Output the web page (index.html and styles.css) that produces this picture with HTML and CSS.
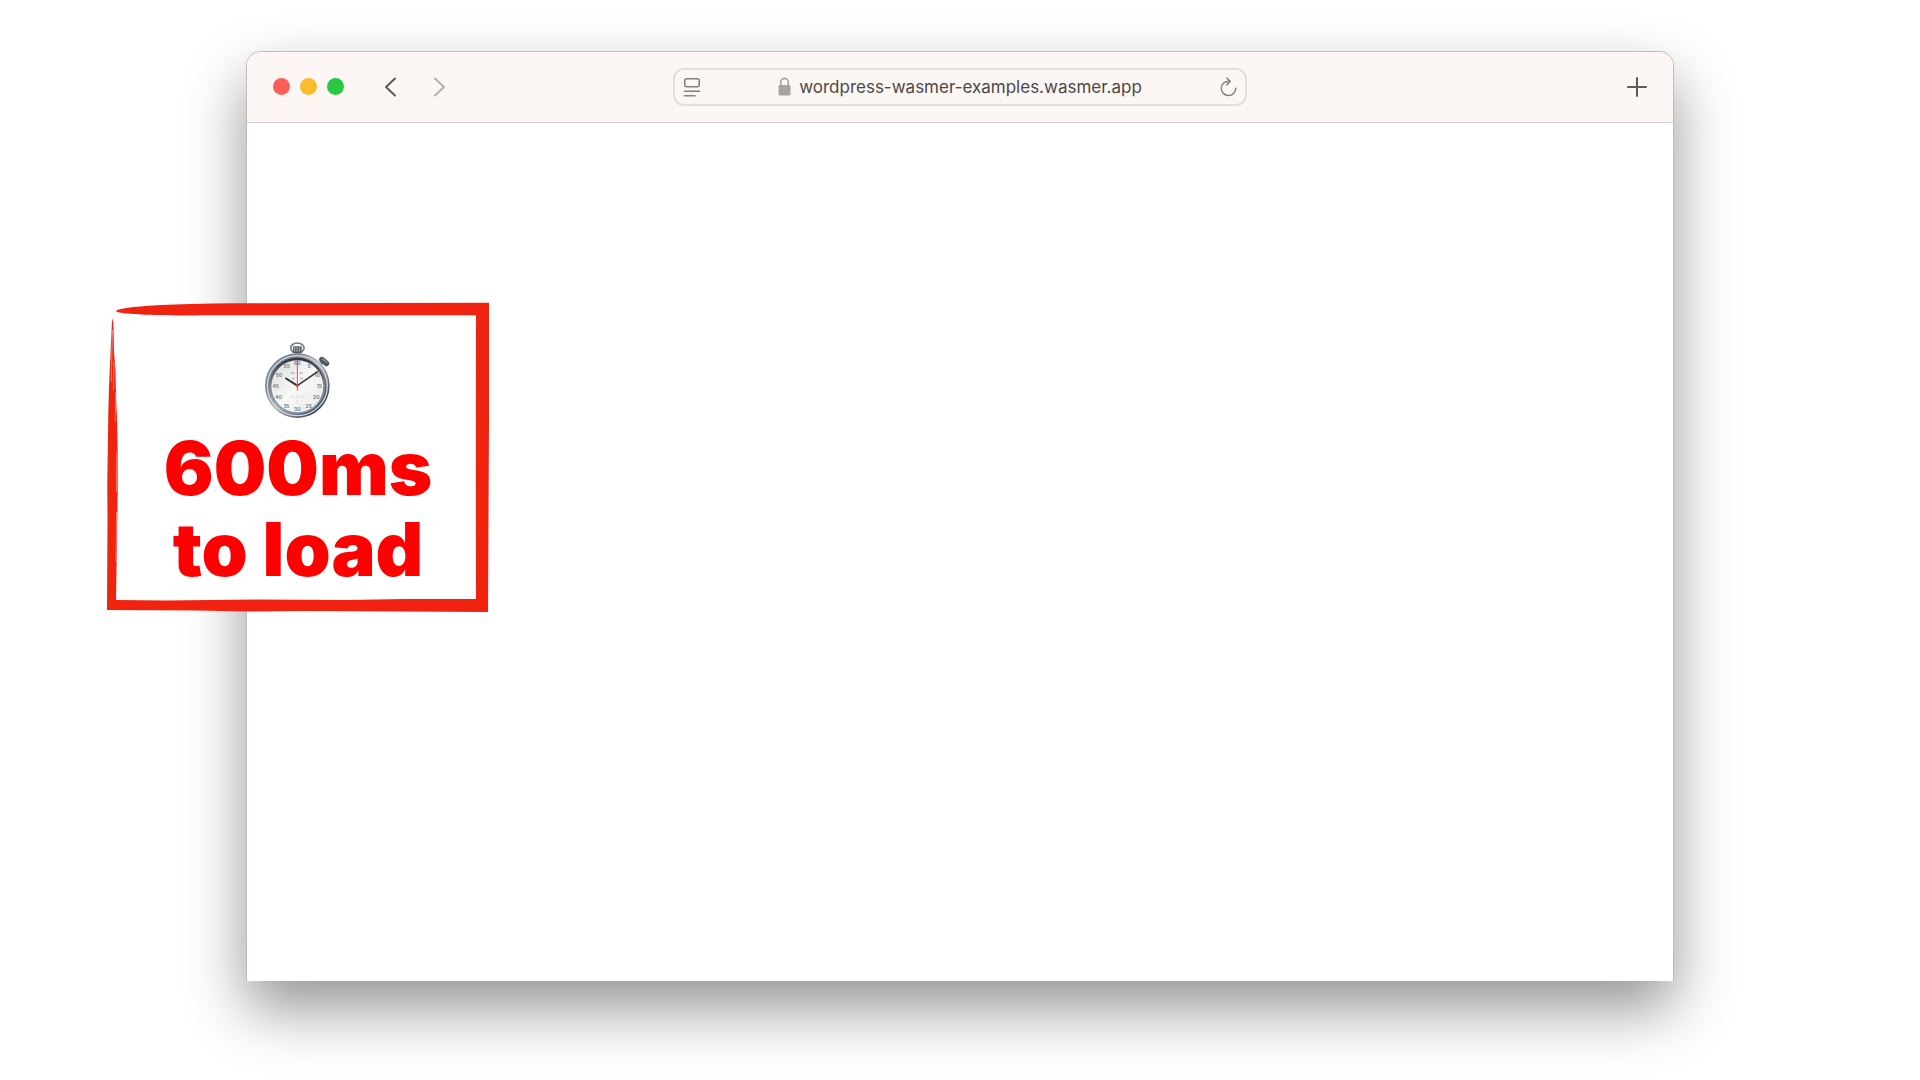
FILE: index.html
```
<!DOCTYPE html>
<html lang="en">
<head>
  <meta charset="UTF-8" />
  <meta name="viewport" content="width=device-width, initial-scale=1.0" />
  <title>600ms to load</title>
  <link rel="stylesheet" href="styles.css">
</head>
<body>
  <main class="stage">
    <!-- Browser window -->
    <div class="browser">
      <header class="toolbar">
        <div class="toolbar-left">
          <div class="lights">
            <button class="light red" aria-label="Close"></button>
            <button class="light yellow" aria-label="Minimize"></button>
            <button class="light green" aria-label="Zoom"></button>
          </div>
          <div class="history">
            <button class="icon-button" aria-label="Back">
              <svg width="13" height="20" viewBox="0 0 13 20"><path d="M11 1.500 2 10l9 8.500" /></svg>
            </button>
            <button class="icon-button forward" aria-label="Forward">
              <svg width="13" height="20" viewBox="0 0 13 20"><path d="M2 1.500 11 10l-9 8.500" /></svg>
            </button>
          </div>
        </div>

        <form class="address">
          <button type="button" class="icon-button small" aria-label="Page settings">
            <svg width="18" height="20" viewBox="0 0 18 20">
              <rect x="1.700" y="1.700" width="14.600" height="8" rx="2" />
              <path d="M1.500 14.200h15M1.500 18.700h10.500" />
            </svg>
          </button>
          <div class="url">
            <svg class="lock" width="13" height="19" viewBox="0 0 13 19">
              <path class="shackle" d="M2.700 9V5.200a3.800 3.800 0 0 1 7.600 0V9" />
              <rect x="0.500" y="8" width="12" height="10.500" rx="1.600" />
            </svg>
            <input type="text" aria-label="Address" value="wordpress-wasmer-examples.wasmer.app">
          </div>
          <button type="button" class="icon-button small" aria-label="Reload">
            <svg width="18" height="20" viewBox="0 0 18 20">
              <path d="M10 4.200A7.200 7.200 0 1 0 16.700 11.200" />
              <path d="M7.800 1 11.200 4.200 7.800 7.600" />
            </svg>
          </button>
        </form>

        <div class="toolbar-right">
          <button class="icon-button" aria-label="New tab">
            <svg width="20" height="20" viewBox="0 0 20 20"><path d="M10 1v18M1 10h18" /></svg>
          </button>
        </div>
      </header>
      <section class="page"></section>

      <!-- Load time callout -->
      <aside class="callout">
        <svg class="frame" viewBox="0 0 384 312" preserveAspectRatio="none">
          <path class="paper" d="M9 12 20 6H376V303H6Z" />
          <path class="brush" d="M10 8.700C13 7 20 5.500 32 4.700C42 3.500 52 3 62 2.700C95 1.500 125 1.300 156 1.300L383 .700L383 120L382 310L200 309L140 309.500L90 308.500L1 308L1.500 220L1.300 180L2.300 111L3 85L5 41L6 20L7 16L7.500 26L8 50L9.500 68L10 95L11 115L11.700 150L11.700 188L11 240L10 298L60 298.500L150 297.500L240 298L300 297L370 297L369.800 180L370 13.300H106C80 13.600 55 13.300 39 12.700C30 12.300 24 12 19 11.300C13 10.500 10 10 10 8.700Z" />
          <path class="scratch" d="M6.500 28 5.800 55 5.300 80M8 60 7.500 88M9.800 90 9.300 120M10.800 150 10.400 190M10.600 210 10 260" />
        </svg>
        <svg class="stopwatch" width="66" height="77" viewBox="0 0 198 231">
          <defs>
            <linearGradient id="metal" x1="0" y1="0" x2="1" y2="1">
              <stop offset="0" stop-color="#637f9b" />
              <stop offset=".3" stop-color="#7d858c" />
              <stop offset=".5" stop-color="#b5b9bc" />
              <stop offset=".75" stop-color="#5c6169" />
              <stop offset="1" stop-color="#1d222c" />
            </linearGradient>
            <linearGradient id="rim" x1="0" y1="0" x2="0" y2="1">
              <stop offset="0" stop-color="#2f333b" />
              <stop offset=".5" stop-color="#7f8387" />
              <stop offset="1" stop-color="#7f9fc5" />
            </linearGradient>
            <linearGradient id="dial" x1="0" y1="0" x2="1" y2="1">
              <stop offset="0" stop-color="#d9dadb" />
              <stop offset=".5" stop-color="#f8f8f8" />
              <stop offset="1" stop-color="#e6e7e9" />
            </linearGradient>
          </defs>
          <ellipse cx="97" cy="18" rx="20" ry="15" fill="none" stroke="#59616b" stroke-width="5" />
          <ellipse cx="97" cy="17" rx="20" ry="15" fill="none" stroke="#c3c8cc" stroke-width="1.500" />
          <rect x="84" y="13" width="26" height="20" rx="3" fill="#555c65" />
          <path d="M89 15v14M96 15v14M103 15v14" stroke="#aeb3b8" stroke-width="3" />
          <path d="m160 74 14-15" stroke="#7893ad" stroke-width="9" />
          <path d="m171 53 13 11" stroke="#4d555d" stroke-width="17" stroke-linecap="round" />
          <path d="m171 49 15 13" stroke="#8b9299" stroke-width="4" />
          <circle cx="97" cy="131" r="97" fill="url(#metal)" />
          <circle cx="97" cy="131" r="90" fill="none" stroke="#cfd8de" stroke-width="4" />
          <circle cx="97" cy="131" r="84" fill="url(#rim)" />
          <circle cx="97" cy="133" r="78" fill="url(#dial)" />
          <g class="numbers">
            <text x="97" y="69">60</text>
            <text x="132" y="79">5</text>
            <text x="156" y="104">10</text>
            <text x="163" y="138">15</text>
            <text x="154" y="171">20</text>
            <text x="131" y="197">25</text>
            <text x="97" y="207">30</text>
            <text x="64" y="197">35</text>
            <text x="41" y="171">40</text>
            <text x="32" y="138">45</text>
            <text x="42" y="104">50</text>
            <text x="65" y="79">55</text>
          </g>
          <path d="M78 93h11M104 93h12M81 109h9M105 109h9" stroke="#a7a7a7" stroke-width="5" stroke-dasharray="4 2" />
          <path d="M77 164h12M106 164h12M97 158v10M97 174v10" stroke="#dcdcdc" stroke-width="3" />
          <path d="m97 131 62-43" stroke="#32343a" stroke-width="5" />
          <path d="m97 131-36-23" stroke="#32343a" stroke-width="6" />
          <path d="M97 53v93" stroke="#f0493e" stroke-width="3" />
          <circle cx="97" cy="131" r="4" fill="#e4453c" />
        </svg>
        <p>600ms<br>to load</p>
      </aside>
    </div>
  </main>
</body>
</html>
```
FILE: styles.css
```
* {
  box-sizing: border-box;
}
body {
  margin: 0;
  background-color: #fff;
  font-family: Inter, "Liberation Sans", sans-serif;
}
button {
  padding: 0;
  border: none;
  background: none;
  cursor: pointer;
}
.stage {
  display: flex;
  min-height: 100vh;
  padding: 51px 246px 99px;
}

/* Browser window */
.browser {
  position: relative;
  flex: 1;
  display: flex;
  flex-direction: column;
  border: 1px solid #bdbbbb;
  border-bottom: none;
  border-radius: 15px 15px 0 0;
  background-color: #fff;
  box-shadow: 0 28px 60px rgba(0, 0, 0, 0.42);
}
.toolbar {
  display: grid;
  grid-template-columns: 1fr minmax(0, 574px) 1fr;
  align-items: center;
  height: 71px;
  padding: 0 26px 1px;
  border-bottom: 1px solid #d5d1d1;
  border-radius: 14px 14px 0 0;
  background-color: #fcf6f5;
}
.toolbar-left {
  display: flex;
  align-items: center;
  gap: 40px;
}
.toolbar-right {
  display: flex;
  justify-content: flex-end;
}
.lights {
  display: flex;
  gap: 10px;
}
.light {
  width: 17px;
  height: 17px;
  border-radius: 50%;
}
.red {
  background-color: #fb5f57;
}
.yellow {
  background-color: #fcbb2d;
}
.green {
  background-color: #28c840;
}
.history {
  display: flex;
  gap: 36px;
}
.icon-button {
  display: flex;
}
.icon-button svg {
  fill: none;
  stroke: #5f5a5a;
  stroke-width: 2;
  stroke-linecap: round;
  stroke-linejoin: round;
}
.forward svg {
  stroke: #b5b0b0;
}
.small svg {
  stroke: #858080;
  stroke-width: 1.5;
}

/* Address bar */
.address {
  display: flex;
  align-items: center;
  justify-content: space-between;
  height: 38px;
  padding: 0 8px;
  border: 2px solid #e3dddd;
  border-radius: 11px;
}
.url {
  display: flex;
  align-items: center;
  gap: 8px;
}
.url input {
  field-sizing: content;
  padding: 0;
  border: none;
  outline: none;
  background: none;
  font-family: Inter, "Liberation Sans", sans-serif;
  font-size: 17px;
  color: #4b4848;
}
.lock {
  fill: #a8a3a3;
}
.lock .shackle {
  fill: none;
  stroke: #a8a3a3;
  stroke-width: 1.6;
}
.page {
  flex: 1;
}

/* Load time callout, hangs over the left edge of the window */
.callout {
  position: absolute;
  top: 250px;
  left: -141px;
  display: flex;
  flex-direction: column;
  align-items: center;
  gap: 9px;
  width: 384px;
  padding: 40px 0 24px;
}
.frame {
  position: absolute;
  inset: 0;
  width: 100%;
  height: 100%;
}
.paper {
  fill: #fff;
}
.brush {
  fill: #ef230f;
}
.scratch {
  fill: none;
  stroke: #f9a199;
  stroke-width: 0.7;
}
.stopwatch {
  position: relative;
}
.numbers {
  font-size: 15px;
  font-weight: 600;
  fill: #73767b;
  text-anchor: middle;
}
.callout p {
  position: relative;
  margin: 0;
  font-size: 74px;
  font-weight: 900;
  line-height: 81px;
  text-align: center;
  color: #f00;
}
```
